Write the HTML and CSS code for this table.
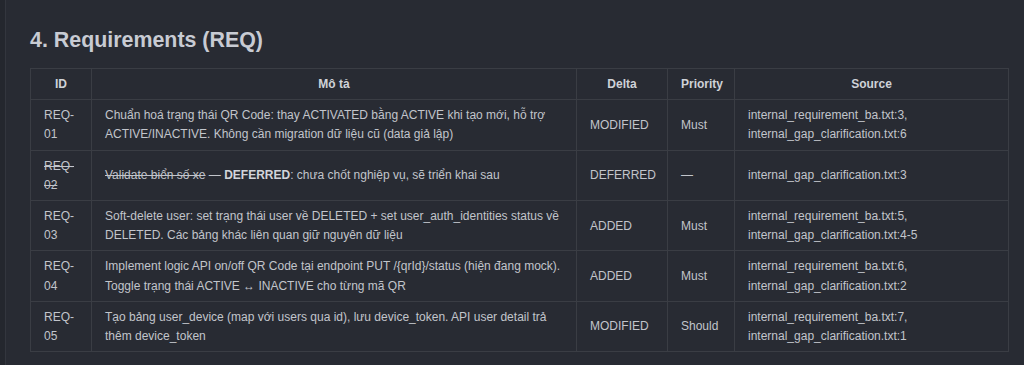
FILE: index.html
```html
<!DOCTYPE html>
<html lang="vi">
<head>
<meta charset="utf-8">
<title>Requirements</title>
<link rel="stylesheet" href="styles.css">
</head>
<body>
<div class="page">
  <aside class="rail"></aside>
  <main class="content">
    <h2 class="section-title">4. Requirements (REQ)</h2>
    <table class="req-table">
      <colgroup>
        <col class="c-id">
        <col class="c-desc">
        <col class="c-delta">
        <col class="c-prio">
        <col class="c-src">
      </colgroup>
      <thead>
        <tr>
          <th>ID</th>
          <th>Mô tả</th>
          <th>Delta</th>
          <th>Priority</th>
          <th>Source</th>
        </tr>
      </thead>
      <tbody>
        <tr>
          <td>REQ-01</td>
          <td>Chuẩn hoá trạng thái QR Code: thay ACTIVATED bằng ACTIVE khi tạo mới, hỗ trợ ACTIVE/INACTIVE. Không cần migration dữ liệu cũ (data giả lập)</td>
          <td>MODIFIED</td>
          <td>Must</td>
          <td>internal_requirement_ba.txt:3,<br>internal_gap_clarification.txt:6</td>
        </tr>
        <tr>
          <td><s>REQ-02</s></td>
          <td><s>Validate biển số xe</s> — <strong>DEFERRED</strong>: chưa chốt nghiệp vụ, sẽ triển khai sau</td>
          <td>DEFERRED</td>
          <td>—</td>
          <td>internal_gap_clarification.txt:3</td>
        </tr>
        <tr>
          <td>REQ-03</td>
          <td>Soft-delete user: set trạng thái user về DELETED + set user_auth_identities status về DELETED. Các bảng khác liên quan giữ nguyên dữ liệu</td>
          <td>ADDED</td>
          <td>Must</td>
          <td>internal_requirement_ba.txt:5,<br>internal_gap_clarification.txt:4-5</td>
        </tr>
        <tr>
          <td>REQ-04</td>
          <td>Implement logic API on/off QR Code tại endpoint PUT /{qrId}/status (hiện đang mock). Toggle trạng thái ACTIVE ↔ INACTIVE cho từng mã QR</td>
          <td>ADDED</td>
          <td>Must</td>
          <td>internal_requirement_ba.txt:6,<br>internal_gap_clarification.txt:2</td>
        </tr>
        <tr>
          <td>REQ-05</td>
          <td>Tạo bảng user_device (map với users qua id), lưu device_token. API user detail trả thêm device_token</td>
          <td>MODIFIED</td>
          <td>Should</td>
          <td>internal_requirement_ba.txt:7,<br>internal_gap_clarification.txt:1</td>
        </tr>
      </tbody>
    </table>
  </main>
</div>
</body>
</html>
```

FILE: styles.css
```css
html, body {
  margin: 0;
  padding: 0;
  background: #282b33;
}

body {
  font-family: "Liberation Sans", Arial, sans-serif;
  color: #c5c8ce;
}

.page {
  display: flex;
  min-height: 365px;
}

.rail {
  width: 5px;
  flex: none;
  background: #24272e;
  border-right: 1px solid #33363e;
}

.content {
  flex: 1;
  padding: 26px 16px 0 24px;
}

.section-title {
  margin: 0 0 14px 0;
  font-size: 21.4px;
  line-height: 28px;
  font-weight: bold;
  color: #c8cbd3;
}

.req-table {
  width: 978px;
  border-collapse: collapse;
  table-layout: fixed;
  font-size: 12px;
  line-height: 19.2px;
}

.c-id { width: 61px; }
.c-desc { width: 485px; }
.c-delta { width: 91px; }
.c-prio { width: 67px; }
.c-src { width: 274px; }

.req-table th,
.req-table td {
  border: 1px solid #3a3d44;
  padding: 6px 13px 5px;
  vertical-align: middle;
}

.req-table th {
  font-weight: bold;
  text-align: center;
  color: #cfd2d8;
}

.req-table td {
  text-align: left;
  color: #c2c5cb;
}

.req-table strong {
  color: #d2d5db;
}
```
